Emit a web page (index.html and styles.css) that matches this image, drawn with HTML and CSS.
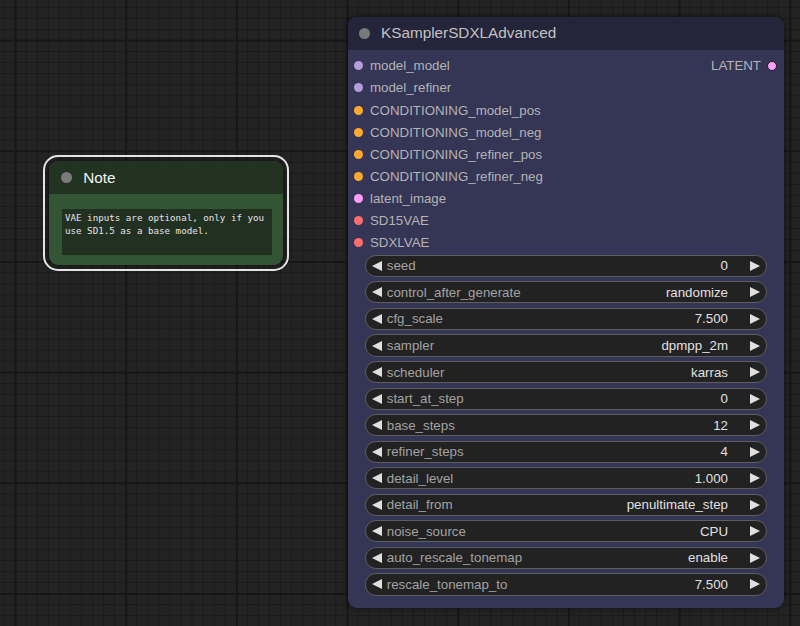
FILE: index.html
```html
<!DOCTYPE html>
<html>
<head>
<meta charset="utf-8">
<link rel="stylesheet" href="styles.css">
</head>
<body>
<div class="canvas">
  <div class="node note">
    <div class="title"><span class="tdot"></span><span class="ttext">Note</span></div>
    <div class="note-body">
      <div class="textarea">VAE inputs are optional, only if you use SD1.5 as a base model.</div>
    </div>
  </div>

  <div class="node ksampler">
    <div class="title"><span class="tdot"></span><span class="ttext">KSamplerSDXLAdvanced</span></div>
    <div class="kbody">
      <div class="slots">
        <div class="inputs">
          <div class="slot"><span class="sdot model"></span>model_model</div>
          <div class="slot"><span class="sdot model"></span>model_refiner</div>
          <div class="slot"><span class="sdot cond"></span>CONDITIONING_model_pos</div>
          <div class="slot"><span class="sdot cond"></span>CONDITIONING_model_neg</div>
          <div class="slot"><span class="sdot cond"></span>CONDITIONING_refiner_pos</div>
          <div class="slot"><span class="sdot cond"></span>CONDITIONING_refiner_neg</div>
          <div class="slot"><span class="sdot latent"></span>latent_image</div>
          <div class="slot"><span class="sdot vae"></span>SD15VAE</div>
          <div class="slot"><span class="sdot vae"></span>SDXLVAE</div>
        </div>
        <div class="outputs">
          <div class="slot out">LATENT<span class="odot"></span></div>
        </div>
      </div>
      <div class="widgets">
        <div class="widget"><svg class="arr" viewBox="0 0 10 10"><polygon points="0,5 10,0 10,10"/></svg><span class="wlabel">seed</span><span class="wval">0</span><svg class="arr" viewBox="0 0 10 10"><polygon points="10,5 0,0 0,10"/></svg></div>
        <div class="widget"><svg class="arr" viewBox="0 0 10 10"><polygon points="0,5 10,0 10,10"/></svg><span class="wlabel">control_after_generate</span><span class="wval">randomize</span><svg class="arr" viewBox="0 0 10 10"><polygon points="10,5 0,0 0,10"/></svg></div>
        <div class="widget"><svg class="arr" viewBox="0 0 10 10"><polygon points="0,5 10,0 10,10"/></svg><span class="wlabel">cfg_scale</span><span class="wval">7.500</span><svg class="arr" viewBox="0 0 10 10"><polygon points="10,5 0,0 0,10"/></svg></div>
        <div class="widget"><svg class="arr" viewBox="0 0 10 10"><polygon points="0,5 10,0 10,10"/></svg><span class="wlabel">sampler</span><span class="wval">dpmpp_2m</span><svg class="arr" viewBox="0 0 10 10"><polygon points="10,5 0,0 0,10"/></svg></div>
        <div class="widget"><svg class="arr" viewBox="0 0 10 10"><polygon points="0,5 10,0 10,10"/></svg><span class="wlabel">scheduler</span><span class="wval">karras</span><svg class="arr" viewBox="0 0 10 10"><polygon points="10,5 0,0 0,10"/></svg></div>
        <div class="widget"><svg class="arr" viewBox="0 0 10 10"><polygon points="0,5 10,0 10,10"/></svg><span class="wlabel">start_at_step</span><span class="wval">0</span><svg class="arr" viewBox="0 0 10 10"><polygon points="10,5 0,0 0,10"/></svg></div>
        <div class="widget"><svg class="arr" viewBox="0 0 10 10"><polygon points="0,5 10,0 10,10"/></svg><span class="wlabel">base_steps</span><span class="wval">12</span><svg class="arr" viewBox="0 0 10 10"><polygon points="10,5 0,0 0,10"/></svg></div>
        <div class="widget"><svg class="arr" viewBox="0 0 10 10"><polygon points="0,5 10,0 10,10"/></svg><span class="wlabel">refiner_steps</span><span class="wval">4</span><svg class="arr" viewBox="0 0 10 10"><polygon points="10,5 0,0 0,10"/></svg></div>
        <div class="widget"><svg class="arr" viewBox="0 0 10 10"><polygon points="0,5 10,0 10,10"/></svg><span class="wlabel">detail_level</span><span class="wval">1.000</span><svg class="arr" viewBox="0 0 10 10"><polygon points="10,5 0,0 0,10"/></svg></div>
        <div class="widget"><svg class="arr" viewBox="0 0 10 10"><polygon points="0,5 10,0 10,10"/></svg><span class="wlabel">detail_from</span><span class="wval">penultimate_step</span><svg class="arr" viewBox="0 0 10 10"><polygon points="10,5 0,0 0,10"/></svg></div>
        <div class="widget"><svg class="arr" viewBox="0 0 10 10"><polygon points="0,5 10,0 10,10"/></svg><span class="wlabel">noise_source</span><span class="wval">CPU</span><svg class="arr" viewBox="0 0 10 10"><polygon points="10,5 0,0 0,10"/></svg></div>
        <div class="widget"><svg class="arr" viewBox="0 0 10 10"><polygon points="0,5 10,0 10,10"/></svg><span class="wlabel">auto_rescale_tonemap</span><span class="wval">enable</span><svg class="arr" viewBox="0 0 10 10"><polygon points="10,5 0,0 0,10"/></svg></div>
        <div class="widget"><svg class="arr" viewBox="0 0 10 10"><polygon points="0,5 10,0 10,10"/></svg><span class="wlabel">rescale_tonemap_to</span><span class="wval">7.500</span><svg class="arr" viewBox="0 0 10 10"><polygon points="10,5 0,0 0,10"/></svg></div>
      </div>
    </div>
  </div>
</div>
</body>
</html>
```

FILE: styles.css
```css
html, body {
  margin: 0;
  padding: 0;
}
body {
  width: 800px;
  height: 626px;
  overflow: hidden;
  font-family: "Liberation Sans", Arial, sans-serif;
}
.canvas {
  position: relative;
  width: 800px;
  height: 626px;
  background-color: #232323;
  background-image:
    linear-gradient(to right, #171717 2.2px, transparent 2.2px),
    linear-gradient(to bottom, #171717 2.2px, transparent 2.2px),
    linear-gradient(to right, #1a1a1a 1.1px, transparent 1.1px),
    linear-gradient(to bottom, #1a1a1a 1.1px, transparent 1.1px);
  background-size:
    110.7px 110.7px,
    110.7px 110.7px,
    11.07px 11.07px,
    11.07px 11.07px;
  background-position:
    14.6px 0,
    0 39.6px,
    3.5px 0,
    0 6.8px;
}
.node {
  position: absolute;
  border-radius: 9px;
  box-shadow: 0 0 6px rgba(0, 0, 0, 0.55);
  display: flex;
  flex-direction: column;
}
.title {
  height: 33px;
  flex: none;
  display: flex;
  align-items: center;
  border-radius: 9px 9px 0 0;
}
.tdot {
  width: 11px;
  height: 11px;
  border-radius: 50%;
  background: #7a7a7a;
  flex: none;
}
.ttext {
  font-size: 15.3px;
  white-space: nowrap;
}

/* Note */
.note {
  left: 49.3px;
  top: 161px;
  width: 234px;
  height: 104px;
  background: #335533;
  outline: 2px solid #e4e4e4;
  outline-offset: 4px;
}
.note .title {
  background: #223322;
  height: 33.3px;
  padding-left: 11.5px;
}
.note .ttext {
  color: #f2f2f2;
  margin-left: 11.5px;
}
.note-body {
  flex: 1;
  padding: 15px 11.5px 10px 12.7px;
  display: flex;
}
.textarea {
  flex: 1;
  background: #223022;
  color: #e4e4e4;
  font-family: "DejaVu Sans Mono", "Liberation Mono", monospace;
  font-size: 9.2px;
  line-height: 13px;
  padding: 2px 3px;
}

/* KSampler */
.ksampler {
  left: 348px;
  top: 16.5px;
  width: 436px;
  height: 591.5px;
  background: #353555;
}
.ksampler .title {
  background: #24243a;
  padding-left: 10.5px;
}
.ksampler .ttext {
  color: #c2c2c2;
  margin-left: 11.5px;
}
.kbody {
  flex: 1;
  display: flex;
  flex-direction: column;
  padding-top: 5.2px;
}
.slots {
  display: flex;
  justify-content: space-between;
}
.slot {
  height: 22.14px;
  display: flex;
  align-items: center;
  font-size: 13.3px;
  color: #b4b4b4;
  white-space: nowrap;
}
.inputs .slot {
  padding-left: 5.5px;
}
.sdot {
  width: 9px;
  height: 9px;
  border-radius: 50%;
  margin-right: 7.5px;
  flex: none;
}
.sdot.model { background: #b39ddb; }
.sdot.cond { background: #ffa931; }
.sdot.latent { background: #ff9cf9; }
.sdot.vae { background: #ff6e6e; }
.outputs .slot {
  padding-right: 7px;
}
.odot {
  width: 8px;
  height: 8px;
  border-radius: 50%;
  background: #ff9cf9;
  border: 1.2px solid #1a1a22;
  margin-left: 6px;
  flex: none;
}
.widgets {
  display: flex;
  flex-direction: column;
  gap: 4.43px;
  padding: 1px 17px 0 16.6px;
}
.widget {
  height: 22.14px;
  box-sizing: border-box;
  border: 1px solid #5e5e5e;
  border-radius: 11px;
  background: #222222;
  display: flex;
  align-items: center;
  padding: 0 6.5px 0 6.2px;
  font-size: 13.3px;
  white-space: nowrap;
}
.arr {
  width: 10px;
  height: 10px;
  fill: #e0e0e0;
  flex: none;
}
.wlabel {
  color: #a2a2a2;
  margin-left: 5px;
  flex: 1;
}
.wval {
  color: #e0e0e0;
  margin-right: 21.5px;
}
```
